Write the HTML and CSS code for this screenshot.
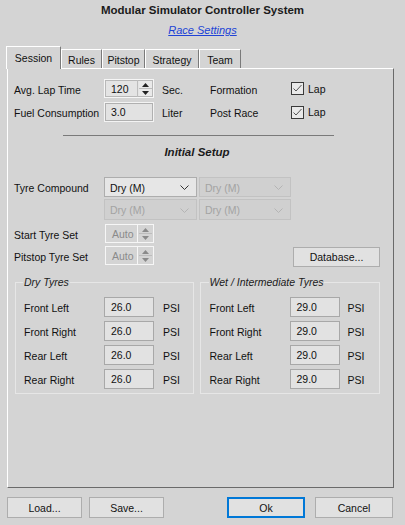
FILE: index.html
```html
<!DOCTYPE html>
<html>
<head>
<meta charset="utf-8">
<link rel="stylesheet" href="styles.css">
</head>
<body>
<div class="title">Modular Simulator Controller System</div>
<div class="sub"><a class="link">Race Settings</a></div>

<div class="tabs">
  <div class="tab active w-session">Session</div>
  <div class="tab w-rules">Rules</div>
  <div class="tab w-pitstop">Pitstop</div>
  <div class="tab w-strategy">Strategy</div>
  <div class="tab w-team">Team</div>
</div>

<div class="panel">
  <div class="row r1">
    <span class="lb">Avg. Lap Time</span>
    <div class="spin">
      <span class="txt">120</span>
      <div class="arr">
        <div class="ab"><svg width="7" height="4" viewBox="0 0 7 4"><path d="M0 4 L3.5 0 L7 4 Z" fill="#222"/></svg></div>
        <div class="ab"><svg width="7" height="4" viewBox="0 0 7 4"><path d="M0 0 L3.5 4 L7 0 Z" fill="#222"/></svg></div>
      </div>
    </div>
    <span class="unit">Sec.</span>
    <span class="lb2">Formation</span>
    <span class="chk"><svg width="13" height="13" viewBox="0 0 13 13"><rect x="0.5" y="0.5" width="12" height="12" fill="#e9e9e9" stroke="#3a3a3a"/><path d="M2.5 6.5 L5 9 L10.5 3" fill="none" stroke="#555" stroke-width="1"/></svg></span>
    <span class="lap">Lap</span>
  </div>
  <div class="row r2">
    <span class="lb">Fuel Consumption</span>
    <div class="edit plain">3.0</div>
    <span class="unit">Liter</span>
    <span class="lb2">Post Race</span>
    <span class="chk"><svg width="13" height="13" viewBox="0 0 13 13"><rect x="0.5" y="0.5" width="12" height="12" fill="#e9e9e9" stroke="#3a3a3a"/><path d="M2.5 6.5 L5 9 L10.5 3" fill="none" stroke="#555" stroke-width="1"/></svg></span>
    <span class="lap">Lap</span>
  </div>

  <div class="sep"></div>
  <div class="hdr">Initial Setup</div>

  <div class="row tc1">
    <span class="lb">Tyre Compound</span>
    <div class="dd">Dry (M)<svg width="9" height="5" viewBox="0 0 9 5"><path d="M0.5 0.5 L4.5 4.5 L8.5 0.5" fill="none" stroke="#333"/></svg></div>
    <div class="dd off second">Dry (M)<svg width="9" height="5" viewBox="0 0 9 5"><path d="M0.5 0.5 L4.5 4.5 L8.5 0.5" fill="none" stroke="#b4b4b4"/></svg></div>
  </div>
  <div class="row tc2">
    <span class="lb"></span>
    <div class="dd off">Dry (M)<svg width="9" height="5" viewBox="0 0 9 5"><path d="M0.5 0.5 L4.5 4.5 L8.5 0.5" fill="none" stroke="#b4b4b4"/></svg></div>
    <div class="dd off second">Dry (M)<svg width="9" height="5" viewBox="0 0 9 5"><path d="M0.5 0.5 L4.5 4.5 L8.5 0.5" fill="none" stroke="#b4b4b4"/></svg></div>
  </div>

  <div class="row st">
    <span class="lb">Start Tyre Set</span>
    <div class="spin off">
      <span class="txt">Auto</span>
      <div class="arr">
        <div class="ab"><svg width="7" height="4" viewBox="0 0 7 4"><path d="M0 4 L3.5 0 L7 4 Z" fill="#8a8a8a"/></svg></div>
        <div class="ab"><svg width="7" height="4" viewBox="0 0 7 4"><path d="M0 0 L3.5 4 L7 0 Z" fill="#8a8a8a"/></svg></div>
      </div>
    </div>
  </div>
  <div class="row pt">
    <span class="lb">Pitstop Tyre Set</span>
    <div class="spin off">
      <span class="txt">Auto</span>
      <div class="arr">
        <div class="ab"><svg width="7" height="4" viewBox="0 0 7 4"><path d="M0 4 L3.5 0 L7 4 Z" fill="#8a8a8a"/></svg></div>
        <div class="ab"><svg width="7" height="4" viewBox="0 0 7 4"><path d="M0 0 L3.5 4 L7 0 Z" fill="#8a8a8a"/></svg></div>
      </div>
    </div>
    <div class="btn db">Database...</div>
  </div>

  <div class="groups">
    <fieldset class="grp dry">
      <legend>Dry Tyres</legend>
      <div class="prow"><span class="plb">Front Left</span><div class="edit pin">26.0</div><span class="psi">PSI</span></div>
      <div class="prow"><span class="plb">Front Right</span><div class="edit pin">26.0</div><span class="psi">PSI</span></div>
      <div class="prow"><span class="plb">Rear Left</span><div class="edit pin">26.0</div><span class="psi">PSI</span></div>
      <div class="prow"><span class="plb">Rear Right</span><div class="edit pin">26.0</div><span class="psi">PSI</span></div>
    </fieldset>
    <fieldset class="grp wet">
      <legend>Wet / Intermediate Tyres</legend>
      <div class="prow"><span class="plb">Front Left</span><div class="edit pin">29.0</div><span class="psi">PSI</span></div>
      <div class="prow"><span class="plb">Front Right</span><div class="edit pin">29.0</div><span class="psi">PSI</span></div>
      <div class="prow"><span class="plb">Rear Left</span><div class="edit pin">29.0</div><span class="psi">PSI</span></div>
      <div class="prow"><span class="plb">Rear Right</span><div class="edit pin">29.0</div><span class="psi">PSI</span></div>
    </fieldset>
  </div>
</div>

<div class="btns">
  <div class="btn load">Load...</div>
  <div class="btn save">Save...</div>
  <div class="btn ok">Ok</div>
  <div class="btn cancel">Cancel</div>
</div>
</body>
</html>
```

FILE: styles.css
```css
* { box-sizing: border-box; margin: 0; padding: 0; }
html, body { background: #d4d4d4; }
body {
  width: 405px;
  height: 525px;
  overflow: hidden;
  font-family: "Liberation Sans", Arial, sans-serif;
  font-size: 10.5px;
  color: #111;
}
.title {
  padding-top: 3px;
  line-height: 14px;
  font-size: 11.5px;
  font-weight: bold;
  text-align: center;
  color: #1b1b1b;
}
.sub { margin-top: 6px; line-height: 14px; text-align: center; font-size: 11px; }
.link { color: #2043d6; font-style: italic; text-decoration: underline; }

.tabs {
  position: relative;
  z-index: 1;
  display: flex;
  align-items: flex-end;
  height: 22px;
  margin-top: 9px;
  padding-left: 6px;
}
.tab {
  height: 19px;
  border-top: 1px solid #fff;
  border-left: 1px solid #fff;
  border-right: 1px solid #7a7a7a;
  display: flex;
  align-items: center;
  justify-content: center;
  padding-top: 1px;
  background: #d4d4d4;
}
.tab.active { height: 23px; margin-bottom: -1px; padding-bottom: 2px; }
.w-session { width: 55px; }
.w-rules { width: 41px; }
.w-pitstop { width: 43px; }
.w-strategy { width: 54px; }
.w-team { width: 42px; }

.panel {
  margin-left: 7px;
  width: 387px;
  height: 420px;
  border: 1px solid;
  border-color: #fff #6a6a6a #6a6a6a #fff;
  padding: 0 13px 0 6px;
}
.row { display: flex; align-items: center; }
.r1 { margin-top: 10px; height: 19px; }
.r2 { margin-top: 4px; height: 20px; }
.lb { width: 90px; flex: none; padding-top: 2px; }
.unit { width: 48px; margin-left: 8px; padding-top: 2px; }
.lb2 { width: 81px; padding-top: 2px; }
.chk { width: 13px; height: 13px; display: flex; }
.lap { margin-left: 4px; }

.spin {
  width: 50px;
  height: 100%;
  display: flex;
  align-items: stretch;
  background: #e4e4e4;
  border: 1px solid #f6f6f6;
  box-shadow: 0 0 0 1px #b8b8b8 inset;
}
.spin .txt { flex: 1; padding: 3px 0 0 6px; }
.arr { width: 16px; display: flex; flex-direction: column; border-left: 1px solid #bdbdbd; padding: 1px; }
.ab { flex: 1; display: flex; align-items: center; justify-content: center; background: #e9e9e9; }
.ab + .ab { border-top: 1px solid #bdbdbd; }
.spin.off { width: 49px; margin-left: 1px; background: #d4d4d4; box-shadow: none; color: #8a8a8a; }
.spin.off .arr { border-left: 1px solid #f6f6f6; }
.spin.off .ab { background: #d4d4d4; }

.edit {
  width: 50px;
  height: 20px;
  padding: 3px 0 0 6px;
  background: #e2e2e2;
  border: 1px solid #a8a8a8;
}
.edit.plain { border-color: #f3f3f3; box-shadow: 0 0 0 1px #b0b0b0 inset; }

.sep { margin: 13px 0 0 49px; width: 271px; border-top: 1px solid #7a7a7a; }
.hdr {
  margin-top: 9px;
  line-height: 14px;
  text-align: center;
  font-size: 11.5px;
  font-weight: bold;
  font-style: italic;
  color: #1b1b1b;
}
.tc1 { margin-top: 18px; height: 20px; }
.tc2 { margin-top: 2px; height: 21px; }
.dd {
  width: 93px;
  height: 100%;
  border: 1px solid #adadad;
  background: #e6e6e6;
  display: flex;
  align-items: center;
  justify-content: space-between;
  padding: 1px 7px 0 5px;
}
.dd.second { width: 92px; margin-left: 2px; }
.dd.off { background: #d0d0d0; border-color: #c2c2c2; color: #a3a3a3; }
.st { margin-top: 4px; height: 19px; }
.pt { margin-top: 3px; height: 20px; align-items: flex-start; }
.pt .lb { align-self: center; }
.pt .spin { height: 19px; }

.btn {
  height: 21px;
  display: flex;
  align-items: center;
  justify-content: center;
  background: #e1e1e1;
  border: 1px solid #adadad;
  color: #111;
}
.db { width: 87px; height: 20px; margin-left: auto; margin-top: 1px; }

.groups { display: flex; margin: 9px 0 0 1px; gap: 6px; }
.grp {
  border: 1px solid #e6e6e6;
  padding: 8px 0 4px 8px;
  min-width: 0;
}
.grp.dry { width: 179px; }
.grp.wet { width: 181px; padding-left: 9px; }
.grp legend { line-height: 14px; font-style: italic; margin-left: -1px; padding: 0 1px; color: #1b1b1b; }
.prow { display: flex; align-items: center; height: 20px; }
.prow + .prow { margin-top: 4px; }
.plb { width: 80px; padding-top: 1px; }
.pin { width: 50px; }
.psi { margin-left: 9px; padding-top: 1px; }
.wet .psi { margin-left: 8px; }

.btns { display: flex; margin-top: 9px; }
.load { width: 75px; margin-left: 7px; }
.save { width: 75px; margin-left: 7px; }
.ok { width: 78px; margin-left: 63px; border: 1px solid #0078d7; box-shadow: 0 0 0 1px #0078d7 inset; }
.cancel { width: 78px; margin-left: 10px; }
```
